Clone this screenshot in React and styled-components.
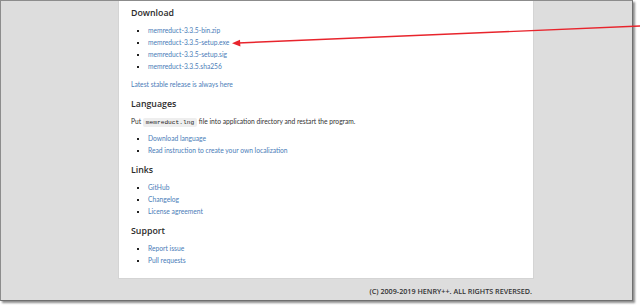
import React from 'react';
import styled, { createGlobalStyle } from 'styled-components';

const Global = createGlobalStyle`
  html, body {
    margin: 0;
    padding: 0;
    background: #ffffff;
  }
  body {
    font-family: Lato, "Open Sans", sans-serif;
    color: #333;
  }
`;

const Shot = styled.div`
  position: relative;
  width: 640px;
  height: 307px;
  overflow: hidden;
`;

const Frame = styled.div`
  width: 633px;
  height: 301px;
  border: 1px solid #8c8c8c;
  border-right-color: #6f6f6f;
  border-bottom-color: #6f6f6f;
  background: #dddddd;
  box-shadow: 2px 2px 2px rgba(0, 0, 0, 0.45);
  display: flex;
  flex-direction: column;
  box-sizing: border-box;
`;

const Panel = styled.main`
  margin-left: 117px;
  width: 416px;
  height: 278px;
  background: #fff;
  box-sizing: border-box;
  padding: 0 12px;
  border-left: 1px solid #d4d4d4;
  border-right: 1px solid #d4d4d4;
  border-bottom: 1px solid #d4d4d4;
`;

const Heading = styled.h2`
  margin: ${p => p.$top ?? 7}px 0 5px;
  font-family: "Open Sans", sans-serif;
  font-size: 8.8px;
  font-weight: 600;
  line-height: 12px;
  color: #2b2b2b;
`;

const List = styled.ul`
  margin: ${p => p.$top || 0}px 0 0;
  padding-left: 17px;
  list-style: square;
  font-size: 6.7px;
  line-height: 12.1px;

  li::marker {
    color: #222;
    font-size: 6px;
  }
`;

const Link = styled.a`
  color: #4a7db8;
  text-decoration: none;
`;

const Para = styled.p`
  margin: ${p => p.$top || 0}px 0 0;
  font-size: 6.7px;
  line-height: 12px;
  color: #333;
`;

const Code = styled.code`
  font-family: "Liberation Mono", "DejaVu Sans Mono", monospace;
  font-size: 6.2px;
  line-height: 1;
  background: #eeeeee;
  padding: 1px 3px;
  border-radius: 2px;
  color: #222;
`;

const Footer = styled.footer`
  flex: 1;
  display: flex;
  align-items: center;
  justify-content: flex-end;
  padding: 2px 100px 0 0;
  font-family: "Open Sans", sans-serif;
  font-size: 7.2px;
  font-weight: 600;
  color: #333;
`;

const Arrow = styled.svg`
  position: absolute;
  left: 0;
  top: 0;
  pointer-events: none;
`;

const downloads = [
  'memreduct-3.3.5-bin.zip',
  'memreduct-3.3.5-setup.exe',
  'memreduct-3.3.5-setup.sig',
  'memreduct-3.3.5.sha256',
];

const LinkList = ({ items, top }) => (
  <List $top={top}>
    {items.map(i => (
      <li key={i}>
        <Link href="#">{i}</Link>
      </li>
    ))}
  </List>
);

export default function App() {
  return (
    <Shot>
      <Global />
      <Frame>
        <Panel>
          <Heading $top={6}>Download</Heading>
          <LinkList items={downloads} />
          <Para $top={6}>
            <Link href="#">Latest stable release is always here</Link>
          </Para>

          <Heading $top={8}>Languages</Heading>
          <Para>
            Put <Code>memreduct.lng</Code> file into application directory and
            restart the program.
          </Para>
          <LinkList
            top={5}
            items={['Download language', 'Read instruction to create your own localization']}
          />

          <Heading>Links</Heading>
          <LinkList items={['GitHub', 'Changelog', 'License agreement']} />

          <Heading $top={8}>Support</Heading>
          <LinkList items={['Report issue', 'Pull requests']} />
        </Panel>
        <Footer>(C) 2009-2019 HENRY++. ALL RIGHTS REVERSED.</Footer>
      </Frame>
      <Arrow width="640" height="307" viewBox="0 0 640 307">
        <line x1="641" y1="26" x2="238" y2="43" stroke="#e8242c" strokeWidth="1.4" />
        <polygon points="232,43.3 240,39.8 240.4,46.6" fill="#e8242c" />
      </Arrow>
    </Shot>
  );
}
